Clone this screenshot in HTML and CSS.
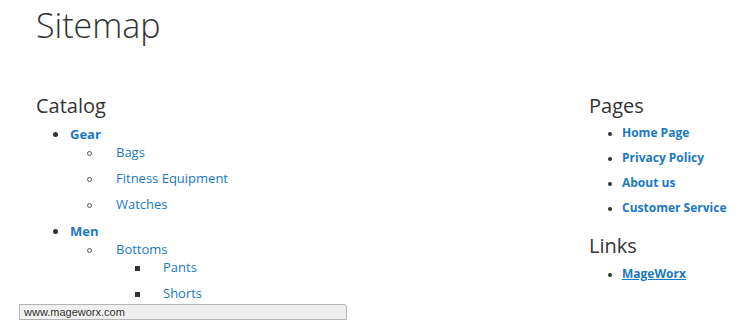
FILE: index.html
```html
<!DOCTYPE html>
<html>
<head>
  <title>Sitemap</title>
  <link rel="stylesheet" href="styles.css">
</head>
<body>
  <h1 class="page-title">Sitemap</h1>

  <div class="sitemap">
    <div class="col-catalog">
      <h2>Catalog</h2>
      <ul class="tree lvl-1">
        <li><a href="#" class="strong">Gear</a>
          <ul class="tree lvl-2">
            <li><a href="#">Bags</a></li>
            <li><a href="#">Fitness Equipment</a></li>
            <li><a href="#">Watches</a></li>
          </ul>
        </li>
        <li><a href="#" class="strong">Men</a>
          <ul class="tree lvl-2">
            <li><a href="#">Bottoms</a>
              <ul class="tree lvl-3">
                <li><a href="#">Pants</a></li>
                <li><a href="#">Shorts</a></li>
              </ul>
            </li>
          </ul>
        </li>
      </ul>
    </div>

    <div class="col-side">
      <h2>Pages</h2>
      <ul class="tree side-list">
        <li><a href="#">Home Page</a></li>
        <li><a href="#">Privacy Policy</a></li>
        <li><a href="#">About us</a></li>
        <li><a href="#">Customer Service</a></li>
      </ul>

      <h2 class="links-title">Links</h2>
      <ul class="tree side-list">
        <li><a href="#" class="ext">MageWorx</a></li>
      </ul>
    </div>
  </div>

  <div class="status-bar">www.mageworx.com</div>
</body>
</html>
```

FILE: styles.css
```css
body {
  margin: 0;
  padding: 0 0 0 36px;
  font-family: "Open Sans", "Liberation Sans", sans-serif;
  color: #333;
  background: #fff;
}
a { color: #1979c3; text-decoration: none; }

.page-title {
  font-size: 34px;
  font-weight: 300;
  line-height: 44px;
  margin: 3px 0 0;
}

.sitemap {
  display: grid;
  grid-template-columns: 553px 1fr;
  margin-top: 44px;
}

h2 {
  font-size: 20px;
  font-weight: 400;
  line-height: 26px;
  margin: 2px 0 5px;
}

.tree {
  list-style: none;
  margin: 0;
  padding: 0;
}
.tree li {
  line-height: 18px;
  margin-bottom: 8px;
}
.tree li::before {
  content: "";
  display: inline-block;
  box-sizing: border-box;
  vertical-align: middle;
}

/* level 1 */
.lvl-1 { padding-left: 17px; }
.lvl-1 > li::before {
  width: 5px;
  height: 5px;
  border-radius: 50%;
  background: #333;
  margin-right: 12px;
}
.strong { font-weight: 700; font-size: 13px; }

/* level 2 */
.lvl-2 { padding-left: 34px; }
.lvl-2 > li { font-size: 13px; }
.lvl-2 > li::before {
  width: 5px;
  height: 5px;
  border-radius: 50%;
  border: 1px solid #555;
  margin-right: 24px;
}

/* level 3 */
.lvl-3 { padding-left: 48px; }
.lvl-3 > li::before {
  width: 5px;
  height: 5px;
  background: #333;
  margin-right: 23px;
}

/* right column */
.side-list { padding-left: 19px; }
.side-list li {
  font-size: 12px;
  font-weight: 700;
  margin-bottom: 7px;
}
.side-list li::before {
  width: 4px;
  height: 4px;
  border-radius: 50%;
  background: #333;
  margin-right: 10px;
}
.links-title { margin-top: 16px; margin-bottom: 6px; }
.ext { text-decoration: underline; }

.status-bar {
  position: absolute;
  left: 19px;
  top: 304px;
  width: 328px;
  height: 16px;
  box-sizing: border-box;
  padding-left: 4px;
  background: #f0f0f0;
  border: 1px solid #b5b5b5;
  border-radius: 0 3px 0 0;
  font: 11px/14px "Liberation Sans", Arial, sans-serif;
  color: #333;
}
```
